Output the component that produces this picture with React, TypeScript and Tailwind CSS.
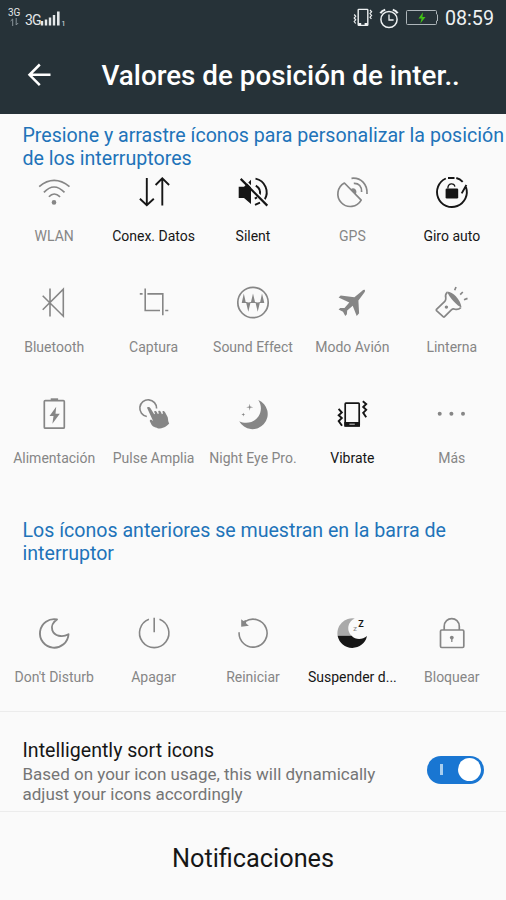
import type { ReactNode } from "react";

type Tile = { label: string; active?: boolean; icon: ReactNode };

const solid = { fill: "currentColor", stroke: "none" };

const wlan = (
  <>
    <path d="M3.2 12.6Q18 .2 33.5 12.6M7.9 18.4Q18 7.6 28.5 18.4M12.9 22.8Q18 17.2 24.1 22.8" />
    <circle cx="18" cy="28.4" r="2.3" {...solid} />
  </>
);
const data = (
  <path strokeWidth="1.9" d="M10.8 4v27M3.9 24.8l6.9 6.4 7-6.4M26.3 31.6V4.4M19.6 11l6.7-6.6 6.8 6.6" />
);
const silent = (
  <>
    <path d="M3.7 12.7H9L16 5.7V30L9 24H3.7Z" {...solid} />
    <path strokeWidth="1.9" d="M20.5 4.6A14 14 0 0 1 29.5 25.8M20 30.8L25 28.6M20.8 11.6Q26.4 15 24.8 21.2M19.8 24.6l2.2-1.2" />
    <path stroke="#fafafa" strokeWidth="1.6" d="M7.5 3.8L33.8 30.2" />
    <path strokeWidth="2.2" d="M5.7 4.9L32.3 31.6" />
  </>
);
const gps = (
  <>
    <path d="M10.4 9A12.5 12.5 0 1 0 27.2 26.2Z" strokeLinejoin="round" />
    <path d="M17.5 4.3C27 3.2 33.6 10.5 33 20M19.8 9.3C24.8 9 28 12.5 27.6 18" />
    <path d="M16.5 15.5C20 12.2 24.3 16.5 21.5 20.5Z" {...solid} />
  </>
);
const rotate = (
  <>
    <path strokeWidth="1.9" d="M11.8 4.5A14.9 14.9 0 1 0 32 13.2M32.4 11L27.7 19.4" />
    <path strokeWidth="1.9" d="M14 4H20.5M22.3 4Q26 5 28.7 7.8" />
    <rect x="11.6" y="14.6" width="12.6" height="9.8" rx="1.2" {...solid} />
    <path strokeWidth="1.3" d="M13.9 14.5C13.6 8.8 20.4 8.5 20.9 12.6" />
  </>
);
const bluetooth = <path d="M14 3.5V31.6M6.7 10.8L27.3 31.2V4.2L6.7 24.8" strokeWidth="1.6" />;
const crop = <path strokeWidth="1.6" d="M3.8 8.9H6.6M11.4 8.9H26.8V30.3M9.2 3.5V25.5H24M29.2 25.5H32.3" />;
const sound = (
  <>
    <circle cx="18" cy="17.5" r="15.2" />
    <path d="M6.8 17.5L8.8 8.5L10.7 17H11.6L13.4 17.6L16 17L18 8.5L20 17L22.7 17.6L25.2 17L27 8.5L29.2 17.5V18H24.8L22.7 26.8L20.6 18H15.4L13.3 26.8L11.2 18H6.8Z" {...solid} />
  </>
);
const plane = (
  <path
    {...solid}
    d="M30.8 5.1C31.4 5.9 30.8 7 30 8.1L24.4 15.6L25.1 28.3L22.7 31L18.7 20.8L13.2 25.5L12.9 29.2L11.3 31L9 26.7L4.6 24.6L6.2 23L10.5 23.1L15.3 17.4L4.6 12.6L6.7 10.5L20.4 12.2L28 5.9C29 5 30.2 4.5 30.8 5.1Z"
  />
);
const torch = (
  <>
    <path strokeLinejoin="round" d="M13.4 7.2Q10.8 9.6 11.8 13Q12 15 10.8 16.4L2.5 24.3Q2 25 2.5 25.6L9.4 31.8Q10 32.3 10.6 31.7L17.6 24.6Q19 23.4 21 24.2Q24.2 25.1 26.8 22.6" />
    <path d="M13.2 6.6C19 7.2 26.3 14.2 27.6 22.6C24 21.8 14.5 12.3 13.2 6.6Z" {...solid} />
    <circle cx="12.4" cy="22.1" r="1.7" {...solid} />
    <path d="M22 2L20.7 5.3M28.8 7L26.2 9.6M33.5 13.4L30 14.8" />
  </>
);
const battery = (
  <>
    <rect x="8.3" y="4.6" width="20" height="27.6" rx="1" />
    <rect x="14.7" y="2.3" width="7.4" height="2.2" {...solid} />
    <path d="M20.2 10.8L13.5 20.1H17.5L16.4 27.8L23.8 17.8H19.5Z" {...solid} />
  </>
);
const tap = (
  <>
    <path strokeWidth="1.6" d="M10.8 20.5A8.4 8.4 0 1 1 20.6 12.5" />
    <path
      {...solid}
      d="M10.9 11.6C11.9 10.4 13.6 10.8 14.5 12.2L18.2 18.2L19 17.8L18 15.6C18.8 14.5 20.3 14.8 20.9 16.3L21.8 18L22.8 17.6L22.2 15.2C23.2 14.4 24.4 14.8 25 16.3L25.9 18.2L26.8 17.8L26.5 15.3C27.5 14.6 28.6 15.2 29.2 16.6L31.7 21.3C32.2 23.4 32 25.6 33.2 27.5C30.8 30.4 26.4 32.6 22.4 32.6C20.4 31.2 17.4 31.5 15.7 29L13.8 25.3C13.5 23.9 14.8 23.3 15.9 24.1L17.2 25.2Z"
    />
  </>
);
const night = (
  <>
    <path d="M23.3 3.9A15.2 15.2 0 1 1 4.2 25.3C11 28.6 19.5 26.5 23.4 20.5C27 15.1 26.5 8.6 23.3 3.9Z" {...solid} />
    <path d="M14.7 7.8L15.3 10.6L18.2 11.2L15.3 11.8L14.7 14.8L14.1 11.8L11.2 11.2L14.1 10.6ZM8.3 16.7L8.8 18L10.2 18.5L8.8 19L8.3 20.4L7.8 19L6.4 18.5L7.8 18Z" {...solid} />
  </>
);
const vibrate = (
  <>
    <rect x="11.2" y="7.2" width="14" height="22.5" rx=".7" />
    <path fillRule="evenodd" d="M10.3 26.1H26V30.8H10.3ZM15.4 27.8V28.7H20.8V27.8Z" {...solid} />
    <path strokeWidth="1.9" d="M28.8 5.2L32.2 8L29.2 11L32.2 13.8L29.2 16.8L32.2 21.3M4.6 12.9L7.8 16.5L4.7 19.2L7.8 22L4.7 25L8 29.8" />
  </>
);
const more = (
  <g {...solid}>
    <circle cx="5.7" cy="17.8" r="2" />
    <circle cx="17.4" cy="17.8" r="2" />
    <circle cx="29" cy="17.8" r="2" />
  </g>
);
const moon = <path strokeLinejoin="round" strokeWidth="1.9" d="M21 4.4A14.3 14.3 0 1 0 32.5 19.2C26 23 18.3 20.8 16.3 15.2C14.9 11.3 17.2 7 21 4.4Z" />;
const power = <path strokeWidth="1.6" d="M12.9 4.2A14.7 14.7 0 1 0 23.5 4.2M18.2 2.8V17.3" />;
const restart = (
  <>
    <path strokeWidth="1.6" d="M4.1 17.2A14 14 0 1 0 10 6.7" />
    <path d="M6.2 4.3L8.4 6L10.8 5L11.2 8.5L13.9 10.8L6.2 11.7Z" {...solid} />
  </>
);
const suspend = (
  <>
    <path d="M3.6 20.8A15 15 0 0 1 20.8 3.4A10.5 10.5 0 0 0 17.6 20.8Z" fill="#a9a9a9" stroke="none" />
    <path d="M3.6 20.8H17.6C21.7 25.2 28.6 24.8 33 21A15 15 0 0 1 3.6 20.8Z" {...solid} />
    <text x="24.2" y="12.4" className="font-['Roboto'] text-[9px] font-bold" {...solid}>Z</text>
    <text x="19.3" y="15.8" className="font-['Roboto'] text-[6px] font-medium" fill="#888" stroke="none">Z</text>
  </>
);
const lock = (
  <>
    <rect x="6.5" y="15" width="23.3" height="17.5" rx="1.2" />
    <path d="M10.2 15V11.5C10.2 1 25.3 1 25.3 11.5V15" />
    <circle cx="17.8" cy="22.6" r="1.9" {...solid} />
    <path d="M17.8 22V27" strokeWidth="1.3" />
  </>
);

const shown: Tile[] = [
  { label: "WLAN", icon: wlan },
  { label: "Conex. Datos", icon: data, active: true },
  { label: "Silent", icon: silent, active: true },
  { label: "GPS", icon: gps },
  { label: "Giro auto", icon: rotate, active: true },
  { label: "Bluetooth", icon: bluetooth },
  { label: "Captura", icon: crop },
  { label: "Sound Effect", icon: sound },
  { label: "Modo Avión", icon: plane },
  { label: "Linterna", icon: torch },
  { label: "Alimentación", icon: battery },
  { label: "Pulse Amplia", icon: tap },
  { label: "Night Eye Pro.", icon: night },
  { label: "Vibrate", icon: vibrate, active: true },
  { label: "Más", icon: more },
];
const hidden: Tile[] = [
  { label: "Don't Disturb", icon: moon },
  { label: "Apagar", icon: power },
  { label: "Reiniciar", icon: restart },
  { label: "Suspender d...", icon: suspend, active: true },
  { label: "Bloquear", icon: lock },
];

function Grid({ tiles }: { tiles: Tile[] }) {
  return (
    <div className="grid grid-cols-5 gap-y-[39px] px-[4.5px]">
      {tiles.map((t) => (
        <div key={t.label} className={`flex h-[72px] flex-col items-center justify-between ${t.active ? "text-[#161616]" : "text-[#868686]"}`}>
          <svg viewBox="0 0 36 36" className="size-9 shrink-0" fill="none" stroke="currentColor" strokeWidth="1.7">
            {t.icon}
          </svg>
          <span className="text-sm leading-5 whitespace-nowrap">{t.label}</span>
        </div>
      ))}
    </div>
  );
}

function StatusBar() {
  return (
    <div className="flex h-9 items-center justify-between pr-[12px] pl-2">
      <div className="flex h-[18px] items-end text-[#e4e8e9]">
        <div className="flex h-[19px] w-[17px] flex-col items-start">
          <span className="text-[10px] leading-[10px]">3G</span>
          <svg viewBox="0 0 10 8" className="ml-[2px] h-2 w-2.5" fill="none" stroke="#89949a" strokeWidth="1">
            <path d="M2.7 8V1L.6 3M6.2 0V7L8.2 5" />
          </svg>
        </div>
        <span className="w-[15px] text-[14px] leading-[13px] tracking-[-0.8px]">3G</span>
        <svg viewBox="0 0 26 17" className="h-[17px] w-[26px]" fill="currentColor">
          <path d="M.8 11h2.4v4.5H.8zM4.8 9.5h2.4v6H4.8zM8.8 7.5h2.4v8H8.8zM12.8 5h2.4v10.5h-2.4zM17 1.5h2.6v14H17z" />
          <text x="21.5" y="15.5" className="font-['Roboto'] text-[7px]">1</text>
        </svg>
      </div>
      <div className="flex items-center text-[#eef1f2]">
        <svg viewBox="0 0 20 20" className="mr-[6px] size-5" fill="none" stroke="currentColor" strokeWidth="1.4">
          <rect x="5.2" y="1.4" width="9.6" height="16" rx=".6" />
          <path strokeWidth="2.6" d="M5.2 16.2H8.2M11.6 16.2H14.6" />
          <path strokeWidth="1.2" d="M17 2l1.6 1.8L17 5.6l1.6 1.8L17 9.2l1.4 1.8M1.2 6.5l1.5 1.8L1.2 10l1.5 1.8-1.5 1.7 1.5 2" />
        </svg>
        <svg viewBox="0 0 20 21" className="mr-[6px] h-[21px] w-5" fill="none" stroke="currentColor" strokeWidth="1.5">
          <circle cx="10" cy="11.5" r="8.1" />
          <path d="M10 6.5V12H14.6" strokeWidth="1.3" />
          <path strokeWidth="2.2" d="M1.4 5.2Q3 2.4 6.2 1.7M18.6 5.2Q17 2.4 13.8 1.7" />
        </svg>
        <svg viewBox="0 0 34 18" className="mr-[6px] h-[18px] w-[34px]" fill="none">
          <path stroke="#aeb6ba" d="M2.5 1.5H30.5Q31.5 1.5 31.5 2.5V5.3M31.5 11.7V14.5Q31.5 15.5 30.5 15.5H2.5Q1.5 15.5 1.5 14.5V2.5Q1.5 1.5 2.5 1.5M32.5 5.5V12" />
          <path fill="#42c416" d="M18 3.3L13.5 9.5H16.6L15.3 14.6L20.5 7.9H17.4Z" />
        </svg>
        <span className="pt-[2px] text-[19.7px] leading-6">08:59</span>
      </div>
    </div>
  );
}

export default function App() {
  return (
    <div className="flex h-[900px] w-[506px] flex-col overflow-hidden bg-[#fafafa] font-['Roboto',sans-serif]">
      <header className="h-[114px] shrink-0 bg-[#263238]">
        <StatusBar />
        <div className="flex h-[78px] items-center pl-[27px] text-white">
          <svg viewBox="0 0 24 24" className="size-6 shrink-0" fill="none" stroke="currentColor" strokeWidth="2.5">
            <path d="M23.5 11.8H2.5M12.8 1.5L2.5 11.8L12.8 22.1" />
          </svg>
          <h1 className="ml-[50.5px] pt-[2px] text-[27.8px] leading-8 font-medium whitespace-nowrap">Valores de posición de inter..</h1>
        </div>
      </header>
      <main className="flex flex-1 flex-col">
        <p className="mt-[10px] mb-[4.3px] h-[46px] pl-[22.5px] text-[19.63px] leading-[23px] whitespace-nowrap text-[#2173b9]">
          Presione y arrastre íconos para personalizar la posición
          <br />
          de los interruptores
        </p>
        <Grid tiles={shown} />
        <p className="mt-[50.3px] mb-[50px] h-[46px] pl-[22.5px] text-[19.6px] leading-[23px] whitespace-nowrap text-[#2173b9]">
          Los íconos anteriores se muestran en la barra de
          <br />
          interruptor
        </p>
        <Grid tiles={hidden} />
        <section className="mt-auto flex h-[101px] items-center justify-between border-y border-[#ececec] pt-[18px] pr-[22px] pl-[22.5px]">
          <div className="whitespace-nowrap">
            <h2 className="text-[19.6px] leading-[25px] text-[#161616]">Intelligently sort icons</h2>
            <p className="pt-px text-[17px] leading-5 text-[#757575]">
              Based on your icon usage, this will dynamically
              <br />
              adjust your icons accordingly
            </p>
          </div>
          <button role="switch" aria-checked="true" className="mb-[2px] flex h-7 w-[57px] items-center justify-between rounded-full bg-[#1976d2] pr-[3px] pl-[13px]">
            <span className="h-[11px] w-[3px] bg-[#a8ceef]" />
            <span className="size-[23px] rounded-full bg-white" />
          </button>
        </section>
      </main>
      <footer className="flex h-[88px] shrink-0 items-center justify-center pt-[5px] text-[25.3px] text-[#161616]">Notificaciones</footer>
    </div>
  );
}
